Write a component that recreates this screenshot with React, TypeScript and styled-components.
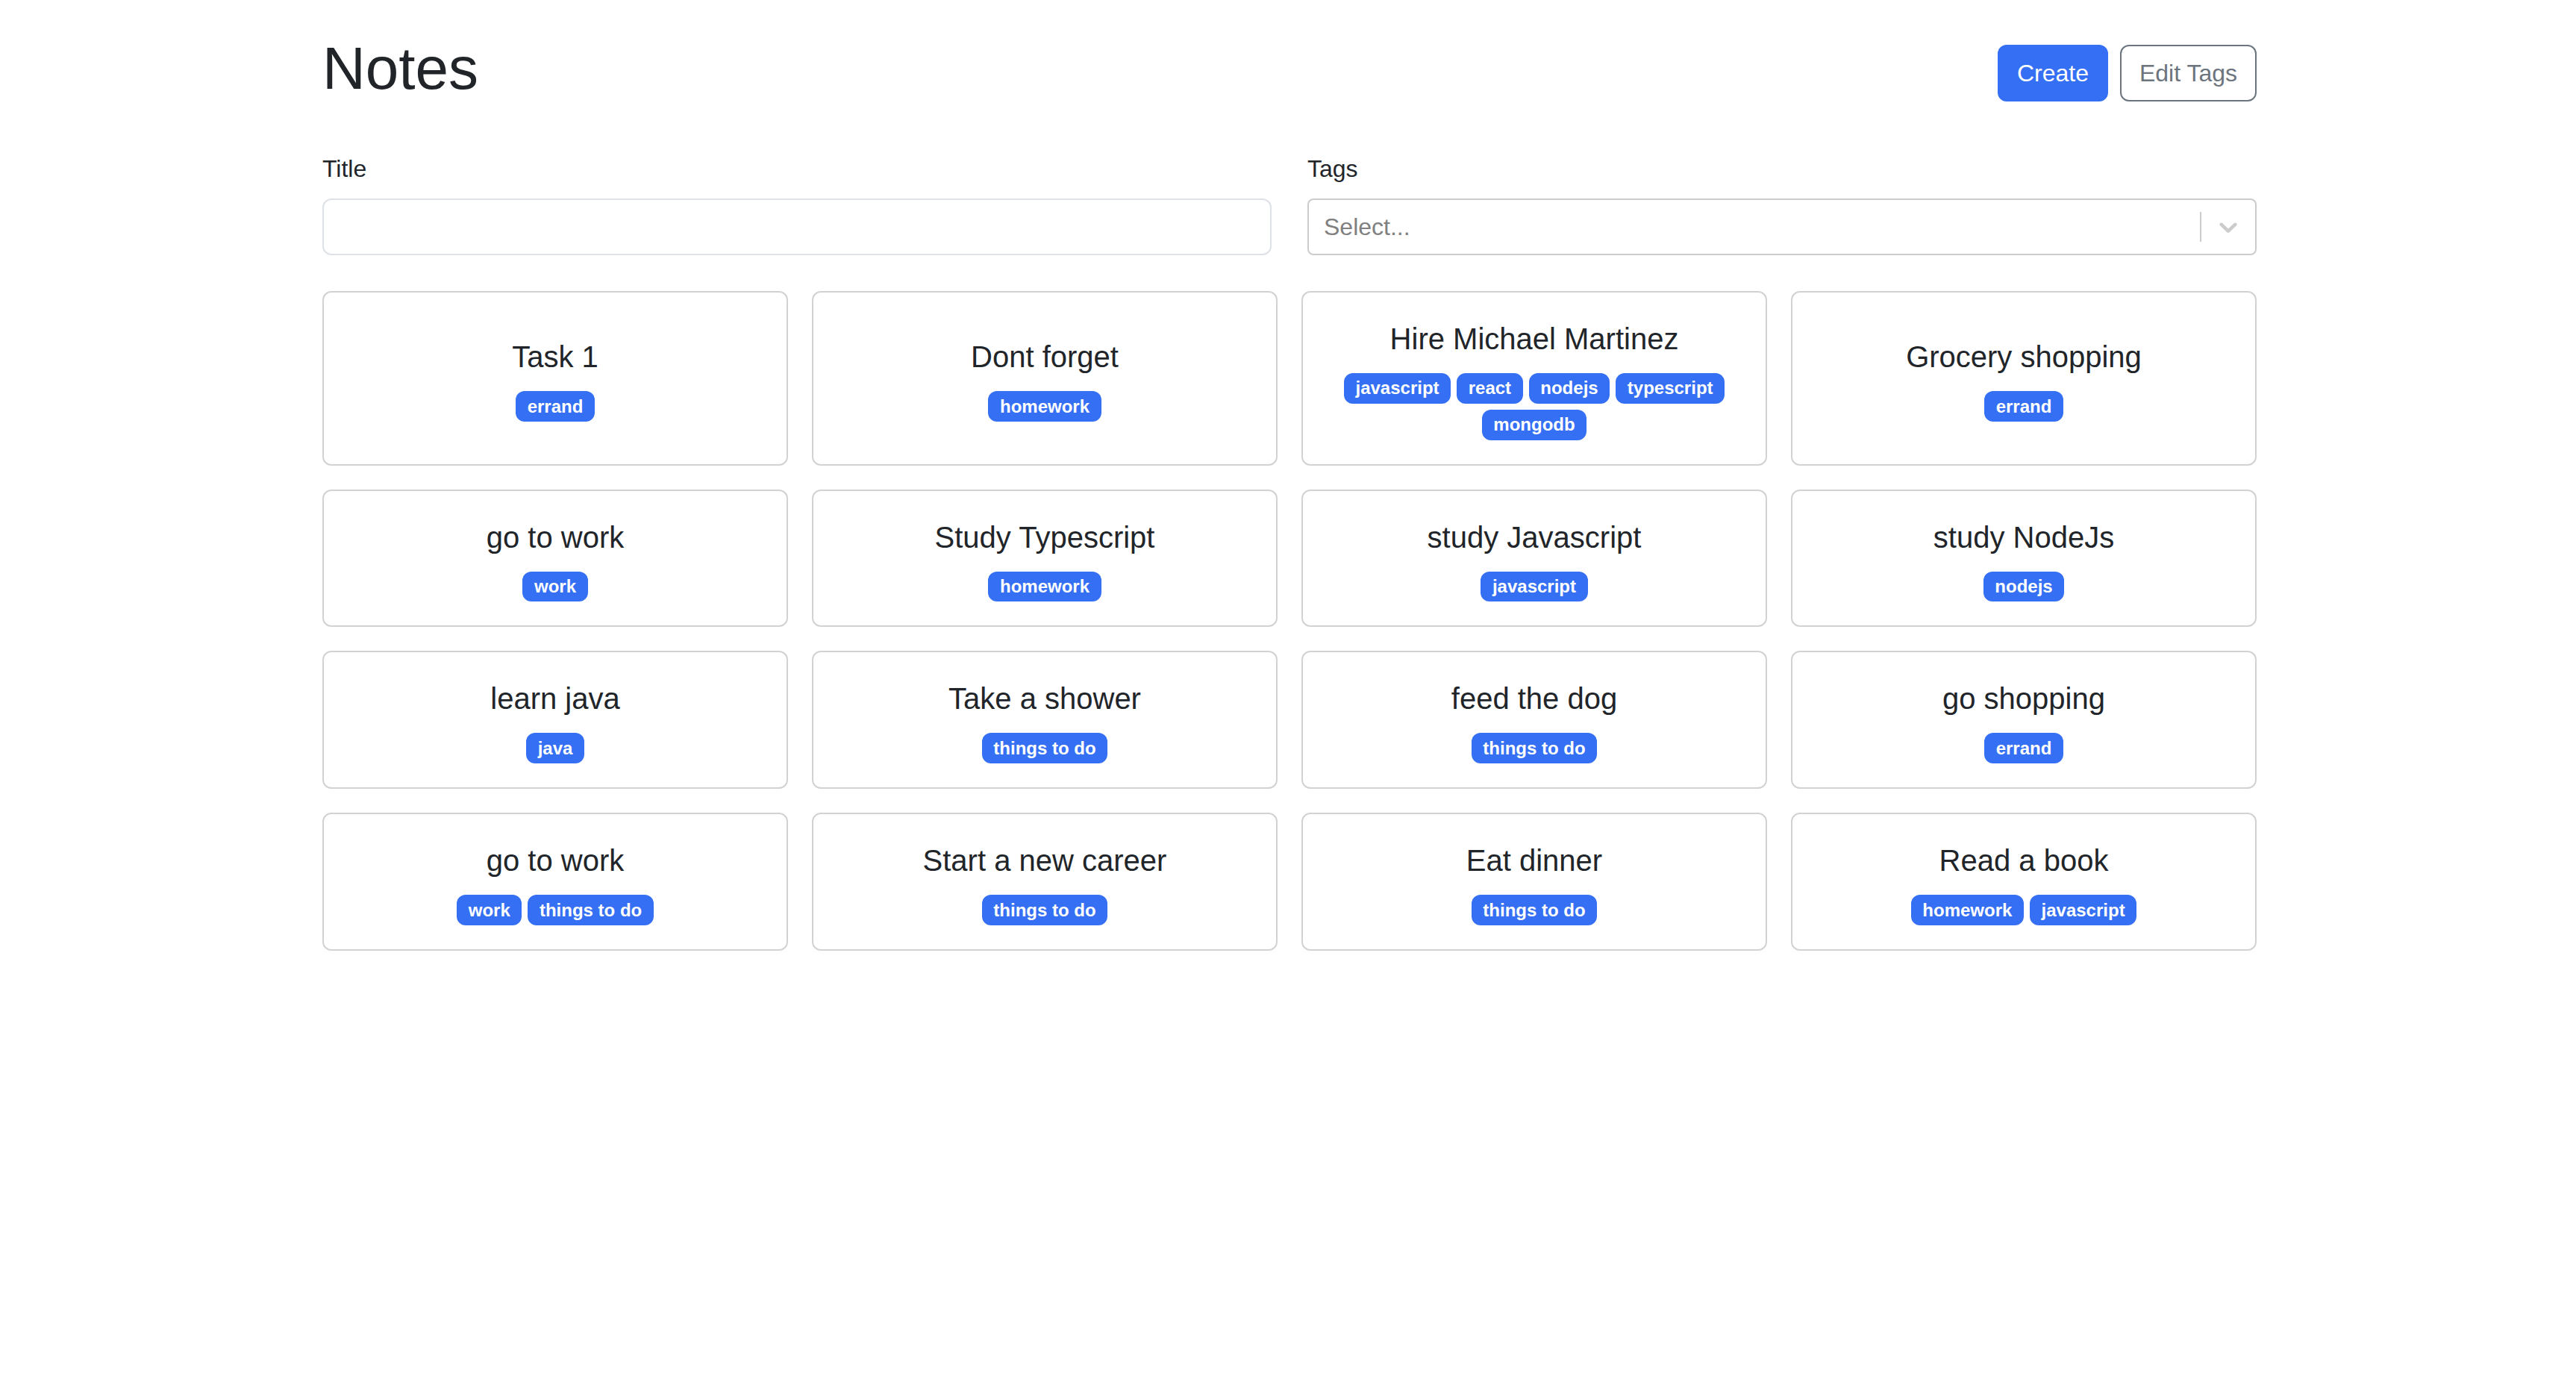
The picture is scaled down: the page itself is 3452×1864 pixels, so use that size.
import styled, { createGlobalStyle } from "styled-components";

const primary = "#346ff4";
const textColor = "#212529";
const fontStack = `"Liberation Sans", Arial, Helvetica, sans-serif`;

type Note = {
  id: string;
  title: string;
  tags: string[];
};

const notes: Note[] = [
  { id: "1", title: "Task 1", tags: ["errand"] },
  { id: "2", title: "Dont forget", tags: ["homework"] },
  {
    id: "3",
    title: "Hire Michael Martinez",
    tags: ["javascript", "react", "nodejs", "typescript", "mongodb"],
  },
  { id: "4", title: "Grocery shopping", tags: ["errand"] },
  { id: "5", title: "go to work", tags: ["work"] },
  { id: "6", title: "Study Typescript", tags: ["homework"] },
  { id: "7", title: "study Javascript", tags: ["javascript"] },
  { id: "8", title: "study NodeJs", tags: ["nodejs"] },
  { id: "9", title: "learn java", tags: ["java"] },
  { id: "10", title: "Take a shower", tags: ["things to do"] },
  { id: "11", title: "feed the dog", tags: ["things to do"] },
  { id: "12", title: "go shopping", tags: ["errand"] },
  { id: "13", title: "go to work", tags: ["work", "things to do"] },
  { id: "14", title: "Start a new career", tags: ["things to do"] },
  { id: "15", title: "Eat dinner", tags: ["things to do"] },
  { id: "16", title: "Read a book", tags: ["homework", "javascript"] },
];

const GlobalStyle = createGlobalStyle`
  * {
    box-sizing: border-box;
  }

  html,
  body {
    margin: 0;
    background: #fff;
  }

  body {
    font-family: ${fontStack};
    font-size: 32px;
    line-height: 1.5;
    color: ${textColor};
  }
`;

const Container = styled.div`
  max-width: 2640px;
  margin: 0 auto;
  padding: 50px 22px 48px 26px;
`;

const Header = styled.div`
  display: flex;
  align-items: center;
  justify-content: space-between;
  margin-bottom: 56px;
`;

const H1 = styled.h1`
  margin: -6px 0 6px;
  font-size: 80px;
  font-weight: 500;
  line-height: 1.2;
`;

const ButtonRow = styled.div`
  display: flex;
  gap: 16px;
`;

const Button = styled.button<{ $outline?: boolean }>`
  font-family: ${fontStack};
  font-size: 32px;
  line-height: 48px;
  padding: 12px 24px;
  border-radius: 12px;
  cursor: pointer;
  border: 2px solid ${({ $outline }) => ($outline ? "#6c757d" : primary)};
  background: ${({ $outline }) => ($outline ? "transparent" : primary)};
  color: ${({ $outline }) => ($outline ? "#6c757d" : "#fff")};
`;

const FormRow = styled.form`
  display: grid;
  grid-template-columns: 1fr 1fr;
  column-gap: 48px;
  margin-bottom: 48px;
`;

const FieldGroup = styled.div`
  display: flex;
  flex-direction: column;
`;

const Label = styled.label`
  display: block;
  margin-bottom: 16px;
  line-height: 48px;
`;

const Input = styled.input`
  font-family: ${fontStack};
  font-size: 32px;
  line-height: 48px;
  height: 76px;
  padding: 12px 24px;
  border: 2px solid #dee2e6;
  border-radius: 12px;
  color: ${textColor};
  outline: none;
`;

const SelectControl = styled.div`
  display: flex;
  align-items: center;
  min-height: 76px;
  border: 2px solid #cccccc;
  border-radius: 8px;
  background: #fff;
`;

const SelectValue = styled.div`
  flex: 1;
  padding: 4px 16px;
`;

const Placeholder = styled.span`
  margin: 0 4px;
  color: #808080;
`;

const Separator = styled.span`
  align-self: stretch;
  width: 2px;
  margin: 16px 0;
  background: #cccccc;
`;

const Indicator = styled.div`
  display: flex;
  padding: 16px;
  color: #cccccc;
`;

const NotesGrid = styled.div`
  display: grid;
  grid-template-columns: repeat(4, 1fr);
  gap: 32px;
`;

const Card = styled.a`
  display: flex;
  border: 2px solid rgba(0, 0, 0, 0.175);
  border-radius: 12px;
  background: #fff;
  color: inherit;
  text-decoration: none;
`;

const CardBody = styled.div`
  flex: 1;
  display: flex;
  flex-direction: column;
  align-items: center;
  justify-content: center;
  gap: 16px;
  padding: 32px;
`;

const CardTitle = styled.span`
  font-size: 40px;
  line-height: 60px;
`;

const Tags = styled.div`
  display: flex;
  flex-wrap: wrap;
  justify-content: center;
  gap: 8px;
`;

const Badge = styled.span`
  display: inline-block;
  padding: 8.4px 15.6px;
  font-size: 24px;
  font-weight: 700;
  line-height: 1;
  color: #fff;
  background: ${primary};
  border-radius: 12px;
  white-space: nowrap;
  overflow: hidden;
  text-overflow: ellipsis;
`;

const ChevronDown = () => (
  <svg width="40" height="40" viewBox="0 0 20 20" fill="currentColor">
    <path d="M4.516 7.548c0.436-0.446 1.043-0.481 1.576 0l3.908 3.747 3.908-3.747c0.533-0.481 1.141-0.446 1.574 0 0.436 0.445 0.408 1.197 0 1.615-0.406 0.418-4.695 4.502-4.695 4.502-0.217 0.223-0.502 0.335-0.787 0.335s-0.57-0.112-0.789-0.335c0 0-4.287-4.084-4.695-4.502s-0.436-1.170 0-1.615z" />
  </svg>
);

const NoteCard = ({ note }: { note: Note }) => (
  <Card href={`#${note.id}`}>
    <CardBody>
      <CardTitle>{note.title}</CardTitle>
      {note.tags.length > 0 && (
        <Tags>
          {note.tags.map((tag) => (
            <Badge key={tag}>{tag}</Badge>
          ))}
        </Tags>
      )}
    </CardBody>
  </Card>
);

export default function App() {
  return (
    <>
      <GlobalStyle />
      <Container>
        <Header>
          <H1>Notes</H1>
          <ButtonRow>
            <Button type="button">Create</Button>
            <Button type="button" $outline>
              Edit Tags
            </Button>
          </ButtonRow>
        </Header>

        <FormRow onSubmit={(e) => e.preventDefault()}>
          <FieldGroup>
            <Label htmlFor="title">Title</Label>
            <Input id="title" type="text" />
          </FieldGroup>
          <FieldGroup>
            <Label>Tags</Label>
            <SelectControl>
              <SelectValue>
                <Placeholder>Select...</Placeholder>
              </SelectValue>
              <Separator />
              <Indicator>
                <ChevronDown />
              </Indicator>
            </SelectControl>
          </FieldGroup>
        </FormRow>

        <NotesGrid>
          {notes.map((note) => (
            <NoteCard key={note.id} note={note} />
          ))}
        </NotesGrid>
      </Container>
    </>
  );
}
